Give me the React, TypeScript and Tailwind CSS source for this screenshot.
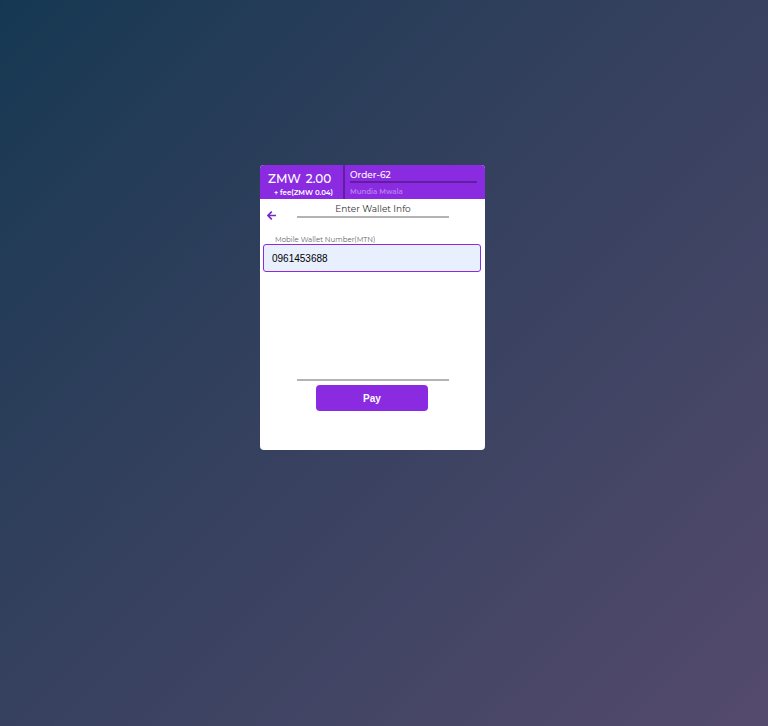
import { useState } from "react";

function Divider() {
  return <hr className="mx-auto h-0.5 w-38 border-0 bg-[#b3b3b3]" />;
}

function OrderHeader() {
  return (
    <header className="flex h-[34px] bg-[#8a2be2] text-white">
      <div className="w-[85px] border-r-2 border-[#611e9e] pt-1 pl-2 whitespace-nowrap">
        <p className="flex gap-[5px] text-[12px] leading-[19px] font-medium">
          <span>ZMW</span>
          <span>2.00</span>
        </p>
        <p className="pl-[6px] text-[7px] leading-[10px] font-semibold">+ fee(ZMW 0.04)</p>
      </div>
      <div className="flex-1 pr-2 pl-[5px]">
        <p className="pt-1 text-[9px] leading-3 font-medium">Order-62</p>
        <hr className="h-0.5 border-0 bg-[#611e9e]" />
        <p className="pt-1 text-[7px] leading-[10px] font-semibold text-[#b980ee]">Mundia Mwala</p>
      </div>
    </header>
  );
}

export default function App() {
  const [wallet, setWallet] = useState("0961453688");

  return (
    <main className="min-h-screen bg-linear-135 from-[#153852] to-[#544a6d] pt-[165px] pr-[23px] font-['Montserrat','Inter',sans-serif]">
      <form
        className="mx-auto flex min-h-[285px] w-[225px] flex-col overflow-hidden rounded bg-white"
        onSubmit={(event) => event.preventDefault()}
      >
        <OrderHeader />
        <div className="grid grid-cols-[37px_152px_36px] pt-1">
          <button type="button" aria-label="Back" className="mt-2 ml-[7px] h-[9px] w-[9px] text-[#722bc7]">
            <svg viewBox="0 0 9 9" className="block h-[9px] w-[9px]" fill="none" stroke="currentColor" strokeWidth="1.7">
              <path d="M4.8 .6 .9 4.5l3.9 3.9M1 4.5h8" />
            </svg>
          </button>
          <div>
            <h1 className="pb-px text-center text-[9px] leading-3 text-[#333]">Enter Wallet Info</h1>
            <Divider />
          </div>
        </div>
        <div className="px-[3px] pt-4">
          <label htmlFor="wallet" className="block pl-3 text-[7px] leading-2 text-[#666]">
            Mobile Wallet Number(MTN)
          </label>
          <input
            id="wallet"
            type="tel"
            value={wallet}
            onChange={(event) => setWallet(event.target.value)}
            className="block h-7 w-[218px] rounded-[3px] border border-[#8a2be2] bg-[#e8f0fe] px-2 font-['Liberation_Sans',Arial,sans-serif] text-[10px] leading-3 text-black outline-none"
          />
        </div>
        <div className="mt-auto pb-[39px]">
          <Divider />
          <button type="submit" className="mt-1 ml-14 block h-[26px] w-28 rounded bg-[#8a2be2] pt-px font-['Liberation_Sans',Arial,sans-serif] text-[10px] leading-3 font-bold text-white">
            Pay
          </button>
        </div>
      </form>
    </main>
  );
}
